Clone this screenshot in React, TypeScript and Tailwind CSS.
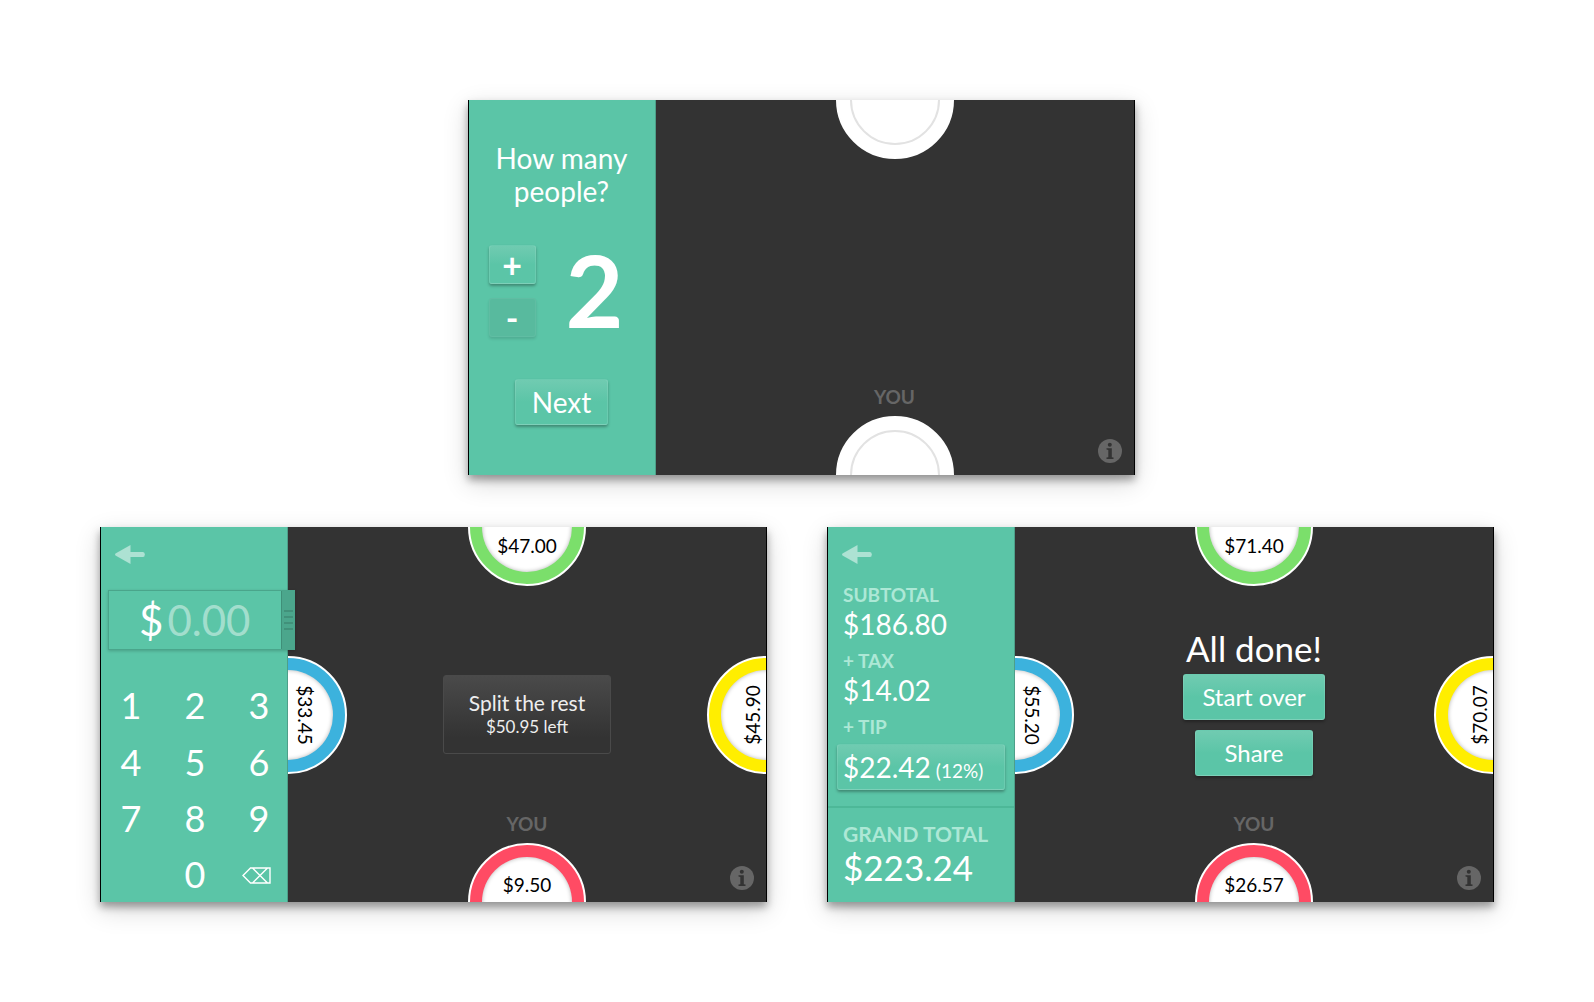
import { useState, type ReactNode } from "react";
import clsx from "clsx";

const btnBase =
  "rounded-[3px] border border-white/10 bg-gradient-to-b from-[#70cbb1] to-[#5bc5a7] to-50% text-white shadow-[0_2px_3px_rgba(0,0,0,0.3)]";

function Screen({ panel, children }: { panel: ReactNode; children: ReactNode }) {
  return (
    <section className="flex aspect-video border-x border-black bg-[#333] shadow-[0_5px_8px_rgba(0,0,0,0.35),0_8px_24px_rgba(0,0,0,0.16)]">
      <div className="relative z-10 flex w-[187px] shrink-0 flex-col border-r border-[#4d9f89] bg-[#5bc5a7] text-white">
        {panel}
      </div>
      {children}
    </section>
  );
}

interface SeatProps {
  amount?: string;
  color?: string;
  side: "top" | "bottom" | "left" | "right";
}

function Seat({ amount, color = "bg-white", side }: SeatProps) {
  return (
    <div
      className={clsx(
        "size-[118px] shrink-0 rounded-full border-2 border-white p-3",
        color,
        side === "top" && "-mt-[59px]",
        side === "bottom" && "-mb-[59px]",
        side === "left" && "-ml-[59px] rotate-90",
        side === "right" && "-mr-[59px] -rotate-90"
      )}
    >
      <div
        className={clsx(
          "flex size-full flex-col items-center rounded-full bg-white text-[19px] leading-6 text-black",
          amount ? "shadow-[inset_0_0_4px_rgba(0,0,0,0.3)]" : "border-2 border-[#e2e2e2]",
          side === "top" && "justify-end pb-[14px]",
          side === "bottom" && "pt-4",
          side === "left" && "pt-4",
          side === "right" && "pt-5"
        )}
      >
        {amount}
      </div>
    </div>
  );
}

interface TableProps {
  top: ReactNode;
  bottom: ReactNode;
  left?: ReactNode;
  right?: ReactNode;
  children?: ReactNode;
}

function Table({ top, bottom, left, right, children }: TableProps) {
  return (
    <div className="relative grid flex-1 grid-rows-[1fr_auto_1fr] overflow-hidden">
      <div className="flex justify-center">{top}</div>
      <div className="flex items-center justify-between">
        {left}
        {children}
        {right}
      </div>
      <div className="flex flex-col items-center justify-end">
        <p className="mb-[7px] text-[19px] leading-6 font-bold text-[#666]">YOU</p>
        {bottom}
      </div>
      <button type="button" aria-label="Info" className="absolute right-3 bottom-3">
        <svg viewBox="0 0 24 24" className="size-6">
          <circle cx="12" cy="12" r="12" fill="#666" />
          <circle cx="11.800" cy="5.800" r="2" fill="#333" />
          <path fill="#333" d="M8.500 9.200H13.800V18.200L15.500 18.600V20H8.500V18.600L10.300 18.200V10.900L8.500 10.500Z" />
        </svg>
      </button>
    </div>
  );
}

function BackButton() {
  return (
    <button type="button" aria-label="Back" className="ml-[14px] self-start">
      <svg viewBox="0 0 30 19" className="h-[19px] w-[30px] fill-[#ade2d3]">
        <path d="M15.500 0V19L0.500 10.500Q-0.400 9.500 0.500 8.500Z" />
        <path d="M15 7H28Q29.800 7 29.800 9.500T28 12H15Z" />
      </svg>
    </button>
  );
}

function PeoplePanel() {
  const [people, setPeople] = useState(2);

  return (
    <>
      <h1 className="px-5 pt-[42px] text-center text-[28px] leading-[33px]">How many people?</h1>
      <div className="mt-[33px] flex items-center gap-[30px] pl-5">
        <div className="flex flex-col gap-[14px]">
          <button
            type="button"
            aria-label="Add a person"
            onClick={() => setPeople(people + 1)}
            className={clsx(btnBase, "h-[39px] w-[47px] text-[34px] leading-[34px] font-bold")}
          >
            +
          </button>
          <button
            type="button"
            aria-label="Remove a person"
            disabled={people <= 2}
            onClick={() => setPeople(people - 1)}
            className="h-[39px] w-[47px] rounded-[3px] border border-white/5 bg-[#58ba9e] text-[34px] leading-[34px] font-bold text-white shadow-[0_2px_3px_rgba(0,0,0,0.12)]"
          >
            -
          </button>
        </div>
        <output className="pb-1 text-[100px] leading-[96px] font-bold">{people}</output>
      </div>
      <button type="button" className={clsx(btnBase, "mt-[38px] self-center px-4 text-[28px] leading-[44px]")}>
        Next
      </button>
    </>
  );
}

function KeypadPanel() {
  return (
    <>
      <div className="flex h-[63px] flex-col justify-center pb-2">
        <BackButton />
      </div>
      <div className="-mr-2 ml-[7px] flex h-[60px] border border-[#4aa58b] shadow-[0_1px_3px_rgba(0,0,0,0.2)]">
        <label className="flex min-w-0 flex-1 items-center bg-[#5bc5a7] pl-[30px] text-[42px] leading-[56px]">
          $
          <input
            type="text"
            placeholder="0.00"
            aria-label="Amount"
            className="ml-1 w-0 min-w-0 flex-1 bg-transparent outline-none placeholder:text-white/45"
          />
        </label>
        <div className="flex w-[13px] flex-col items-center justify-center gap-1 border-l border-[#3f8f78] bg-[#4ba68c]">
          <span className="h-[2px] w-[9px] bg-[#41917a]" />
          <span className="h-[2px] w-[9px] bg-[#41917a]" />
          <span className="h-[2px] w-[9px] bg-[#41917a]" />
          <span className="h-[2px] w-[9px] bg-[#41917a]" />
        </div>
      </div>
      <div className="-mr-1 -ml-[2px] mt-[27px] grid flex-1 grid-cols-3 grid-rows-4 text-4xl">
        {["1", "2", "3", "4", "5", "6", "7", "8", "9"].map((n) => (
          <button key={n} type="button">
            {n}
          </button>
        ))}
        <button type="button" className="col-start-2">
          0
        </button>
        <button type="button" aria-label="Delete" className="flex items-center justify-center pt-[2px] pr-[6px]">
          <svg viewBox="0 0 29 17" className="h-[17px] w-[29px] fill-none stroke-white" strokeWidth="1.4">
            <path d="M1 8.500L8.500 1H28V16H8.500ZM10.500 1L25.500 16M25.500 1L10.500 16" />
          </svg>
        </button>
      </div>
    </>
  );
}

function TotalsPanel() {
  const label = "text-[19px] leading-6 font-bold text-[#ade8d6]";

  return (
    <>
      <div className="flex h-[56px] flex-col justify-center pb-[2px]">
        <BackButton />
      </div>
      <dl className="px-[15px] text-[28px] leading-[34px]">
        <dt className={label}>SUBTOTAL</dt>
        <dd className="mb-2">$186.80</dd>
        <dt className={label}>+ TAX</dt>
        <dd className="mb-2">$14.02</dd>
        <dt className={label}>+ TIP</dt>
        <dd className="-mx-[6px] mt-[5px]">
          <button
            type="button"
            className={clsx(btnBase, "flex w-full items-baseline gap-[5px] pl-[5px] text-[28px] leading-[44px]")}
          >
            $22.42 <span className="text-[19px] leading-6">(12%)</span>
          </button>
        </dd>
      </dl>
      <dl className="mt-4 border-t-2 border-[#4db898] px-[15px] pt-[14px]">
        <dt className="text-[21px] leading-6 font-bold text-[#ade8d6]">GRAND TOTAL</dt>
        <dd className="text-[35px] leading-[42px]">$223.24</dd>
      </dl>
    </>
  );
}

export default function App() {
  return (
    <main className="min-h-screen bg-white p-[100px] font-['Lato',sans-serif]">
      <div className="grid grid-cols-2 gap-x-[60px] gap-y-[52px]">
        {/* People count */}
        <div className="col-span-2 flex justify-center pl-2">
          <div className="w-[calc(50%-26px)]">
            <Screen panel={<PeoplePanel />}>
              <Table top={<Seat side="top" />} bottom={<Seat side="bottom" />} />
            </Screen>
          </div>
        </div>

        {/* Entering amounts */}
        <Screen panel={<KeypadPanel />}>
          <Table
            top={<Seat side="top" amount="$47.00" color="bg-[#7bdf6b]" />}
            left={<Seat side="left" amount="$33.45" color="bg-[#3cb2dd]" />}
            right={<Seat side="right" amount="$45.90" color="bg-[#ffee00]" />}
            bottom={<Seat side="bottom" amount="$9.50" color="bg-[#ff4b64]" />}
          >
            <button
              type="button"
              className="rounded-[3px] border border-[#4a4a4a] bg-gradient-to-b from-[#4a4a4a] to-[#333] to-80% px-[25px] pt-[15px] pb-[14px] text-[21px] leading-6 text-[#eee]"
            >
              Split the rest
              <span className="block text-[17px] leading-6">$50.95 left</span>
            </button>
          </Table>
        </Screen>

        {/* Final totals */}
        <Screen panel={<TotalsPanel />}>
          <Table
            top={<Seat side="top" amount="$71.40" color="bg-[#7bdf6b]" />}
            left={<Seat side="left" amount="$55.20" color="bg-[#3cb2dd]" />}
            right={<Seat side="right" amount="$70.07" color="bg-[#ffee00]" />}
            bottom={<Seat side="bottom" amount="$26.57" color="bg-[#ff4b64]" />}
          >
            <div className="mb-[26px] flex flex-col items-center text-white">
              <h2 className="mb-[6px] text-[35px] leading-[40px]">All done!</h2>
              <button type="button" className={clsx(btnBase, "mb-[10px] px-[18px] text-2xl leading-[44px]")}>
                Start over
              </button>
              <button type="button" className={clsx(btnBase, "px-7 text-2xl leading-[44px]")}>
                Share
              </button>
            </div>
          </Table>
        </Screen>
      </div>
    </main>
  );
}
